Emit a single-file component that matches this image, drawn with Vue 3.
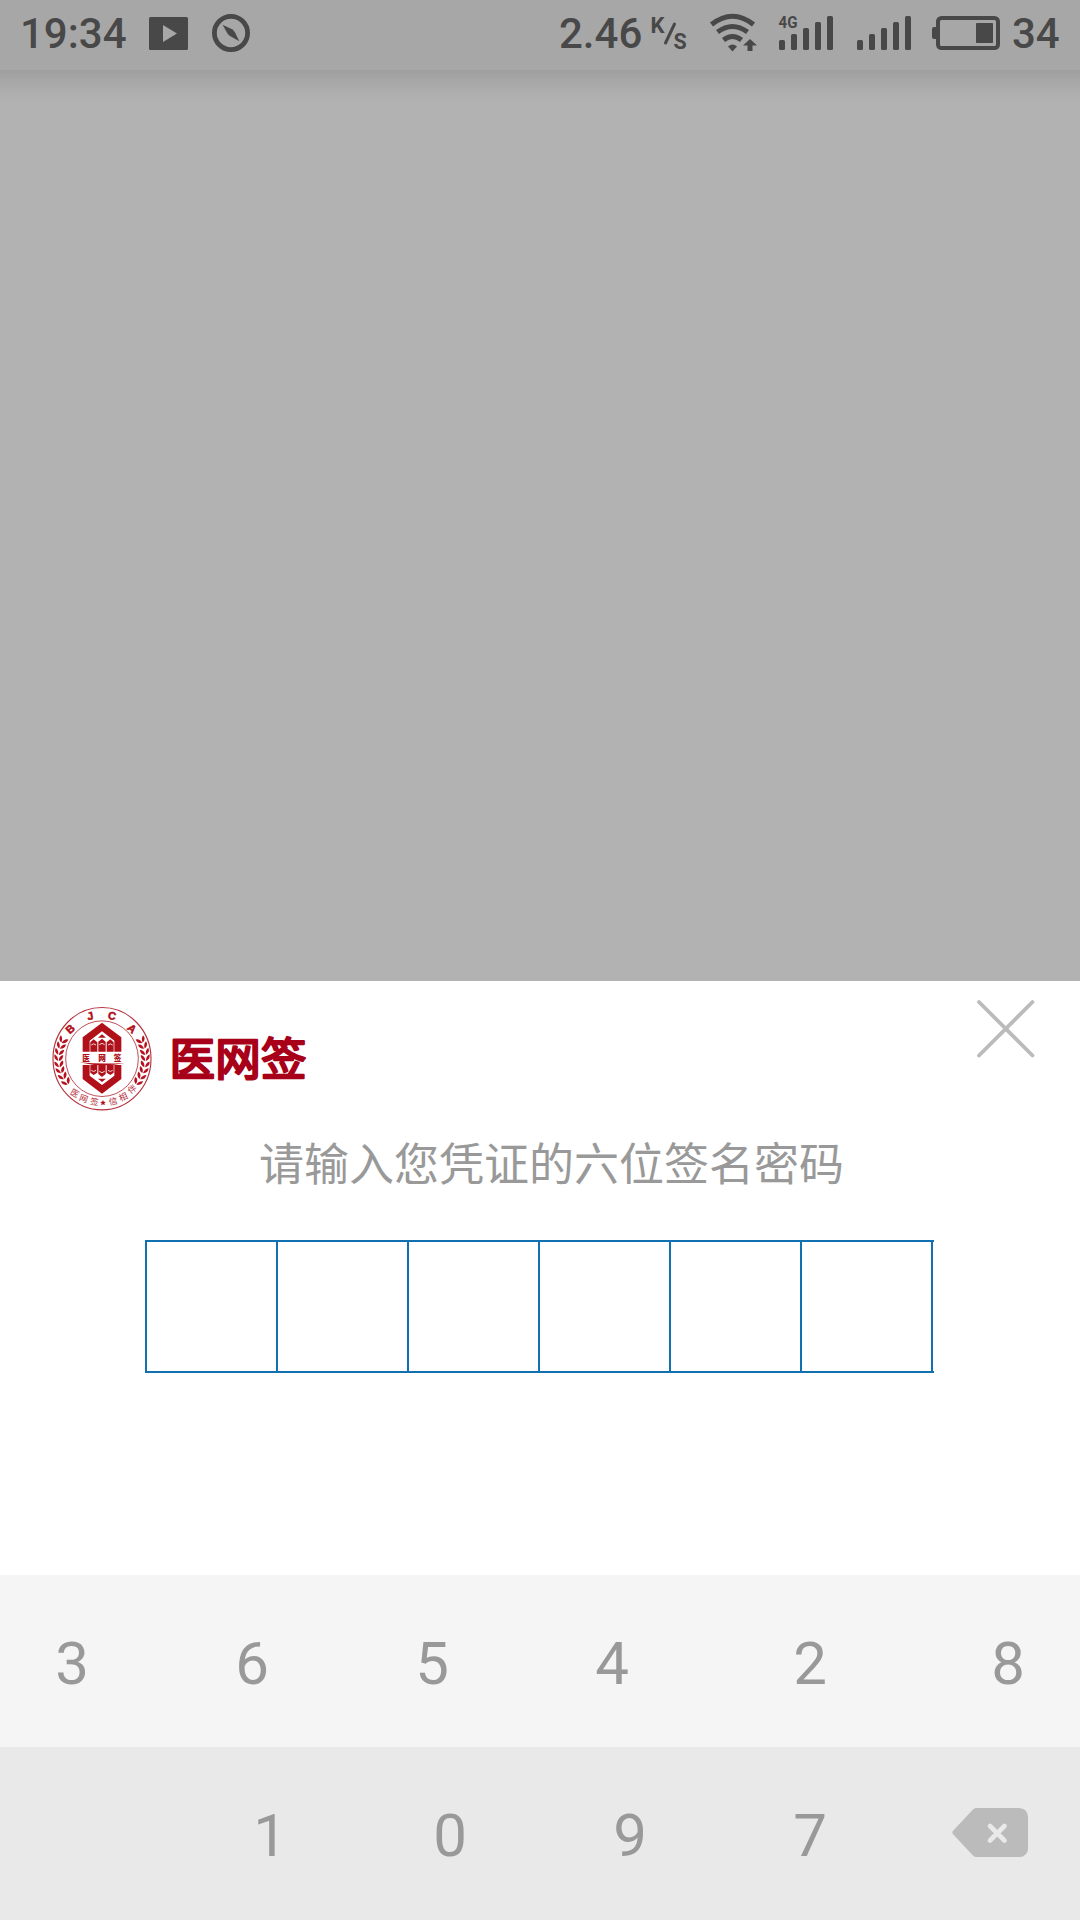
<script setup>
const cells = [0, 1, 2, 3, 4, 5]
const topKeys = ['3', '6', '5', '4', '2', '8']
const bottomKeys = ['1', '0', '9', '7']

const bars = [
  { x: 0, h: 10 },
  { x: 12, h: 16 },
  { x: 24, h: 22 },
  { x: 36, h: 28 },
  { x: 48, h: 34 },
]

const arcLetters = [
  { t: 'B', x: 67, y: 81, r: -42 },
  { t: 'J', x: 127, y: 42, r: -12 },
  { t: 'C', x: 192, y: 42, r: 14 },
  { t: 'A', x: 252, y: 80, r: 42 },
]
const motto = [
  { t: '医', x: 80, y: 274, r: 30 },
  { t: '网', x: 107, y: 290, r: 20 },
  { t: '签', x: 139, y: 300, r: 8 },
  { t: '信', x: 195, y: 298, r: -12 },
  { t: '相', x: 226, y: 285, r: -24 },
  { t: '伴', x: 253, y: 262, r: -36 },
]
const leaves = [
  { x: 46, y: 113, r: 30 },
  { x: 39, y: 130, r: 22 },
  { x: 34, y: 148, r: 14 },
  { x: 32, y: 166, r: 4 },
  { x: 33, y: 185, r: -6 },
  { x: 37, y: 203, r: -16 },
  { x: 44, y: 221, r: -24 },
  { x: 54, y: 238, r: -32 },
]
</script>

<template>
  <div class="screen">
    <header class="status">
      <span class="clock">19:34</span>
      <svg class="play" width="39" height="33" viewBox="0 0 39 33">
        <rect width="39" height="33" rx="1.5" fill="#484848" />
        <path d="M14 8v17l14-8.500z" fill="#a7a7a7" />
      </svg>
      <svg class="compass" width="38" height="38" viewBox="0 0 38 38">
        <circle cx="19" cy="19" r="16.600" fill="none" stroke="#484848" stroke-width="4.800" />
        <path d="M10.500 10.800L20 15.300Q22 16.500 23 18.500L27.300 27.300L18 22Q16.500 21 15.500 19.500Z" fill="#484848" />
      </svg>
      <span class="speed">2.46</span>
      <svg class="unit" width="37" height="46" viewBox="0 -10 37 46">
        <text x="-0.500" y="17" font-size="22">K</text>
        <path d="M23.500 8L14.500 27" stroke="#484848" stroke-width="3" stroke-linecap="round" />
        <text x="22.500" y="32.500" font-size="21.500">S</text>
      </svg>
      <svg class="wifi" width="47" height="38" viewBox="0 0 47 38">
        <g fill="none" stroke="#484848" stroke-width="5">
          <path d="M1.500 10.500Q22.500 -6 43.500 10.500" />
          <path d="M7.500 18Q22.500 7 37.500 18" />
          <path d="M13.500 26Q22.500 19 31.500 26" />
        </g>
        <path d="M18 32.500Q22.500 28.500 27 32.500L22.500 37.500Z" fill="#484848" />
        <path d="M40 25l7 6.500h-4.500v5.500h-5v-5.500h-4.500z" fill="#484848" />
      </svg>
      <svg class="sig1" width="54" height="46" viewBox="0 -10 54 46">
        <text x="-0.500" y="12.500" font-size="16.500" textLength="19" lengthAdjust="spacingAndGlyphs">4G</text>
        <rect v-for="b in bars" :key="b.x" :x="b.x" :y="35 - b.h" width="6" :height="b.h" rx="1.500" fill="#484848" />
      </svg>
      <svg class="sig2" width="54" height="36" viewBox="0 0 54 36">
        <rect v-for="b in bars" :key="b.x" :x="b.x" :y="35 - b.h" width="6" :height="b.h" rx="1.500" fill="#484848" />
      </svg>
      <svg class="battery" width="68" height="34" viewBox="0 0 68 34">
        <rect x="6" y="2" width="60" height="30" rx="3.500" fill="none" stroke="#484848" stroke-width="4" />
        <path d="M4 11H2Q0 11 0 13V21Q0 23 2 23H4Z" fill="#484848" />
        <rect x="44" y="7" width="17" height="20" rx="0.800" fill="#484848" />
      </svg>
      <span class="level">34</span>
    </header>
    <main class="dim"></main>

    <section class="sheet">
      <div class="head">
        <svg class="emblem" width="108" height="112" viewBox="0 0 324 336">
          <g fill="none" stroke="#b5323d">
            <ellipse cx="162" cy="170" rx="147" ry="153.500" stroke-width="3.400" />
            <ellipse cx="162" cy="170" rx="109" ry="113.500" stroke-width="2.600" />
          </g>
          <text
            v-for="l in arcLetters"
            :key="l.t"
            class="latin"
            :transform="`translate(${l.x} ${l.y}) rotate(${l.r})`"
            y="11"
          >{{ l.t }}</text>
          <g v-for="side in [1, -1]" :key="side" :transform="side === 1 ? '' : 'translate(324 0) scale(-1 1)'">
            <g v-for="(f, i) in leaves" :key="i" :transform="`translate(${f.x} ${f.y}) rotate(${f.r})`" fill="#b5121e">
              <path d="M-1 11Q-16 6 -13 -8Q-2 -3 -1 11Z" />
              <path d="M1 11Q0 -4 13 -8Q15 6 1 11Z" />
            </g>
          </g>
          <path d="M162 62L220 106V150H104V106Z" fill="#b01019" />
          <path d="M104 186H220V231L162 275L104 231Z" fill="#b01019" />
          <path d="M162 88L199 116V150H125V116Z" fill="#fff" />
          <path d="M125 188H199V221L162 249L125 221Z" fill="#fff" />
          <g fill="#b01019">
            <path d="M162 97L174 107H150Z" />
            <path d="M127 150V121L137 112L148 121V150Z" />
            <path d="M151 150V119L162 110L173 119V150Z" />
            <path d="M176 150V121L187 112L197 121V150Z" />
            <path d="M127 186V212L137 219L148 212V186Z" />
            <path d="M151 186V216L162 225L173 216V186Z" />
            <path d="M176 186V212L187 219L197 212V186Z" />
            <path d="M150 230H174L162 240Z" />
          </g>
          <g fill="none" stroke="#fff" stroke-width="2.500">
            <path d="M130 129Q137 122 144 129M154 128Q162 120 170 128M180 129Q187 122 194 129" />
            <path d="M130 205Q137 212 144 205M154 208Q162 216 170 208M180 205Q187 212 194 205" />
          </g>
          <path d="M98 149H226V189H98Z" fill="#fff" />
          <path d="M94 181Q162 187 230 183Q162 198 94 181Z" fill="#b01019" />
          <g class="band">
            <text x="114" y="176">医</text>
            <text x="162" y="176">网</text>
            <text x="209" y="176">签</text>
          </g>
          <text
            v-for="m in motto"
            :key="m.t"
            class="motto"
            :transform="`translate(${m.x} ${m.y}) rotate(${m.r})`"
            y="9"
          >{{ m.t }}</text>
          <path d="M165 294l2.400 5.500 6 .5-4.500 4 1.500 6-5.400-3.200-5.400 3.200 1.500-6-4.500-4 6-.5z" fill="#b01019" />
        </svg>
        <svg class="brand" width="140" height="66" viewBox="0 0 140 66">
          <text x="0.500" y="50" textLength="137">医网签</text>
        </svg>
        <svg class="close" width="60" height="60" viewBox="0 0 60 60">
          <path d="M3 3L56.500 56.500M56.500 3L3 56.500" stroke="#bbb" stroke-width="3.800" stroke-linecap="round" />
        </svg>
      </div>
      <p class="prompt">请输入您凭证的六位签名密码</p>
      <div class="code"><i v-for="c in cells" :key="c"></i></div>
    </section>

    <footer class="pad">
      <div class="row top"><span v-for="k in topKeys" :key="k">{{ k }}</span></div>
      <div class="row bottom">
        <span></span>
        <span v-for="k in bottomKeys" :key="k">{{ k }}</span>
        <span>
          <svg class="del" width="76" height="49" viewBox="0 0 76 49">
            <path d="M.8 23Q0 24.500 .8 26L21 47.500Q22.500 49 24 49H68Q71 49 73.500 46.500Q76 44 76 41V8.500Q76 5 73.500 2.500Q71 0 67 0H24Q22.500 0 21 1.500Z" fill="#bbb" />
            <path d="M38 18L52.500 32.500M52.500 18L38 32.500" stroke="#e9e9e9" stroke-width="4.600" stroke-linecap="round" />
          </svg>
        </span>
      </div>
    </footer>
  </div>
</template>

<style>
body {
  margin: 0;
}
</style>

<style scoped>
.screen {
  width: 1080px;
  height: 1920px;
  display: flex;
  flex-direction: column;
  overflow: hidden;
  font-family: Roboto, "Noto Sans CJK SC", sans-serif;
}
.screen svg {
  display: block;
  flex: none;
  overflow: visible;
}
.status {
  height: 70px;
  flex: none;
  background: #a7a7a7;
  color: #484848;
  display: flex;
  align-items: flex-start;
  font-size: 42px;
  font-weight: 500;
  line-height: 68px;
  white-space: nowrap;
}
.status text {
  font-weight: 700;
  fill: #484848;
}
.clock {
  width: 129px;
  padding-left: 20px;
}
.play {
  margin-top: 16.500px;
}
.compass {
  margin: 14px 0 0 24px;
}
.speed {
  margin-left: 309px;
  width: 92px;
}
.unit {
  margin-top: 6px;
}
.wifi {
  margin: 14px 0 0 22px;
}
.sig1 {
  margin: 5px 0 0 22px;
}
.sig2 {
  margin: 15px 0 0 24px;
}
.battery {
  margin: 16px 0 0 21px;
}
.level {
  margin-left: 12px;
}
.dim {
  height: 911px;
  flex: none;
  background: linear-gradient(#9f9f9f, #a6a6a6 10px, #b0b0b0 26px, #b2b2b2 36px);
}
.sheet {
  height: 594px;
  flex: none;
  background: #fff;
}
.head {
  display: flex;
  align-items: flex-start;
  padding: 18px 44px 0 48px;
}
.emblem {
  margin-top: 3px;
}
.latin {
  font: 900 33px "Liberation Sans", sans-serif;
  fill: #b01019;
  stroke: #b01019;
  stroke-width: 1.500;
  text-anchor: middle;
}
.band text {
  font: 900 23px "Noto Sans CJK SC", sans-serif;
  fill: #b01019;
  text-anchor: middle;
}
.motto {
  font: 400 26px "Noto Sans CJK SC", sans-serif;
  fill: #b5323d;
  text-anchor: middle;
}
.brand {
  margin: 27px 0 0 13px;
}
.brand text {
  font: 400 45.500px "Noto Sans CJK SC", sans-serif;
  fill: #a90019;
  stroke: #a90019;
  stroke-width: 2.400;
  stroke-linejoin: round;
  stroke-linecap: round;
}
.close {
  margin-left: auto;
}
.prompt {
  margin: 19px 0 0 259px;
  font-size: 45px;
  line-height: 66px;
  color: #999;
  white-space: nowrap;
}
.code {
  display: flex;
  width: 787px;
  height: 129px;
  margin: 41px 0 0 145px;
  border: 2px solid #1170b0;
  border-width: 2px 0 2px 2px;
}
.code i {
  box-sizing: border-box;
  width: 131px;
  flex: none;
  border-right: 2px solid #1170b0;
}
.pad {
  flex: none;
  color: #999;
  font-size: 60px;
  line-height: 178px;
}
.row {
  display: grid;
  text-align: center;
}
.top {
  height: 172px;
  background: #f5f5f5;
  grid-template-columns: 144px 36px 144px 36px 144px 36px 144px 54px 144px 54px 144px;
}
.top span:nth-child(1) { grid-column: 1; }
.top span:nth-child(2) { grid-column: 3; }
.top span:nth-child(3) { grid-column: 5; }
.top span:nth-child(4) { grid-column: 7; }
.top span:nth-child(5) { grid-column: 9; }
.top span:nth-child(6) { grid-column: 11; }
.bottom {
  height: 173px;
  background: #e9e9e9;
  grid-template-columns: repeat(6, 180px);
}
.del {
  margin: 61px auto 0;
}
</style>
